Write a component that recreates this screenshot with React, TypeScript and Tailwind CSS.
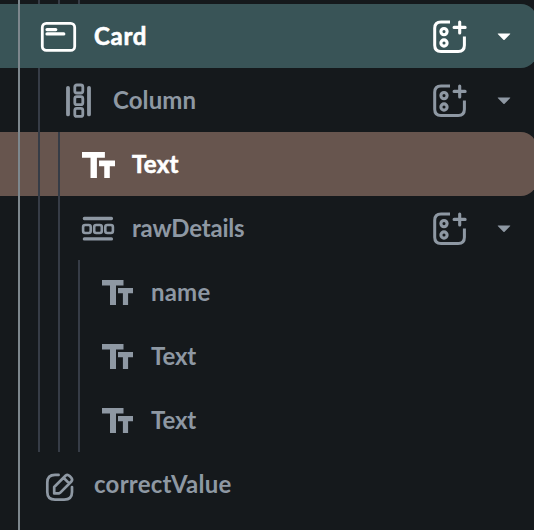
import type { ReactNode } from "react";

function CardIcon() {
  return (
    <svg width="40" height="40" viewBox="0 0 40 40" fill="none" stroke="currentColor">
      <rect x="3.3" y="11.4" width="32.4" height="27" rx="4" strokeWidth="2.8" />
      <path d="M8 17.6h8.8M8 21.9h16.8" strokeWidth="3.2" strokeLinecap="round" />
    </svg>
  );
}

function ColumnIcon() {
  return (
    <svg width="40" height="40" viewBox="0 0 40 40" fill="none" stroke="currentColor">
      <path d="M10 7.8v26.6M31 7.8v26.6" strokeWidth="3.8" strokeLinecap="round" />
      <rect x="16.8" y="5" width="8" height="8" rx="2" strokeWidth="2.8" />
      <rect x="16.8" y="16.7" width="8" height="8" rx="2" strokeWidth="2.8" />
      <rect x="16.8" y="28.4" width="8" height="8" rx="2" strokeWidth="2.8" />
    </svg>
  );
}

function RowIcon() {
  return (
    <svg width="40" height="40" viewBox="0 0 40 40" fill="none" stroke="currentColor">
      <path d="M6.4 10.5h27M6.4 30.9h27" strokeWidth="3.4" strokeLinecap="round" />
      <rect x="5.1" y="17" width="7.6" height="8" rx="2" strokeWidth="2.6" />
      <rect x="16.2" y="17" width="7.6" height="8" rx="2" strokeWidth="2.6" />
      <rect x="27.3" y="17" width="7.6" height="8" rx="2" strokeWidth="2.6" />
    </svg>
  );
}

function TextIcon({ large = false }: { large?: boolean }) {
  const size = large ? 33 : 31;
  return (
    <svg className={large ? "mt-[2px]" : "mt-px"} width={size} height={(size * 25) / 31} viewBox="0 0 31 25" fill="currentColor">
      <path d="M0 0H21.5V5.5H14V25H8V5.5H0ZM16 8H31V13.3H26.1V25H20.9V13.3H16Z" />
    </svg>
  );
}

function EditIcon() {
  return (
    <svg className="mt-[2px]" width="40" height="40" viewBox="0 0 40 40" fill="none" stroke="currentColor" strokeWidth="2.7" strokeLinecap="round" strokeLinejoin="round">
      <path d="M19.6 9.9H16Q8.3 9.9 8.3 17.6V27Q8.3 34.6 16 34.6H25.2Q33 34.6 33 27V22" />
      <path d="M15.2 28.4V22L26.7 10.5Q28.5 9 30.6 11L32 12.4Q34 14.5 32.4 16.5L21.3 27.6L20 28.4ZM24.6 12.8L30.1 18.4" />
    </svg>
  );
}

function AddChildIcon() {
  return (
    <svg width="36" height="36" viewBox="0 0 36 36" fill="none" stroke="currentColor">
      <path d="M18 3H9Q2.7 3 2.7 9.3V26.2Q2.7 32.4 9 32.4H26.2Q32.4 32.4 32.4 26.2V17.6" strokeWidth="3" />
      <path d="M27.7 3v11M22.1 8.4h11" strokeWidth="3.1" strokeLinecap="round" />
      <circle cx="12" cy="12.6" r="3.1" strokeWidth="3.1" />
      <circle cx="12" cy="24" r="3.1" strokeWidth="3.1" />
    </svg>
  );
}

function Guides({ count }: { count: number }) {
  return (
    <div className="flex shrink-0 self-stretch">
      {Array.from({ length: count }, (_, i) => (
        <div key={i} className={`w-5 border-r-2 ${i === 0 ? "border-[#7d878d]" : "border-[#363c46]"}`} />
      ))}
    </div>
  );
}

type RowProps = {
  guides: number;
  icon: ReactNode;
  label: string;
  gap: string;
  text: string;
  tone?: string;
  expandable?: boolean;
};

function TreeRow({ guides, icon, label, gap, text, tone = "text-[#8e98a3]", expandable }: RowProps) {
  return (
    <div className={`flex h-16 w-[537px] shrink-0 items-center rounded-r-2xl ${tone}`}>
      <Guides count={guides} />
      <div className={`flex w-10 shrink-0 items-center justify-center ${gap}`}>{icon}</div>
      <span className={`whitespace-nowrap text-2xl ${text}`}>{label}</span>
      {expandable && (
        <div className="mr-[26px] ml-auto flex items-center gap-[29px] pt-[2px]">
          <AddChildIcon />
          <svg width="14" height="8" viewBox="0 0 14 8" fill="currentColor">
            <path d="M1 .5H13Q13.6.7 13 1.3L7.6 6.8Q7 7.3 6.4 6.8L1 1.3Q.4.7 1 .5Z" />
          </svg>
        </div>
      )}
    </div>
  );
}

export default function App() {
  return (
    <div className="flex h-[530px] w-[534px] flex-col overflow-hidden bg-[#15191c] font-['Lato',sans-serif] font-bold">
      <div className="flex h-1 shrink-0"><Guides count={4} /></div>
      <TreeRow guides={1} icon={<div className="-mt-2"><CardIcon /></div>} label="Card" gap="ml-[19px]" text="ml-[15px] tracking-[0.7px] [-webkit-text-stroke:0.6px]" tone="bg-[#395457] text-white" expandable />
      <TreeRow guides={2} icon={<ColumnIcon />} label="Column" gap="ml-[18px]" text="ml-[15px] tracking-[0.1px]" expandable />
      <TreeRow guides={3} icon={<TextIcon large />} label="Text" gap="ml-[18px]" text="ml-[14px] tracking-[0.3px] [-webkit-text-stroke:0.6px]" tone="bg-[#67554e] text-white" />
      <TreeRow guides={3} icon={<RowIcon />} label="rawDetails" gap="ml-[18px]" text="ml-[14px] tracking-[-0.2px]" expandable />
      <TreeRow guides={4} icon={<TextIcon />} label="name" gap="ml-[17px]" text="ml-[14px] tracking-[0.2px]" />
      <TreeRow guides={4} icon={<TextIcon />} label="Text" gap="ml-[17px]" text="ml-[14px] tracking-[-0.1px]" />
      <TreeRow guides={4} icon={<TextIcon />} label="Text" gap="ml-[17px]" text="ml-[14px] tracking-[-0.1px]" />
      <TreeRow guides={1} icon={<EditIcon />} label="correctValue" gap="ml-[19px]" text="ml-[15px] tracking-[0.25px]" />
      <div className="flex min-h-0 flex-1"><Guides count={1} /></div>
    </div>
  );
}
